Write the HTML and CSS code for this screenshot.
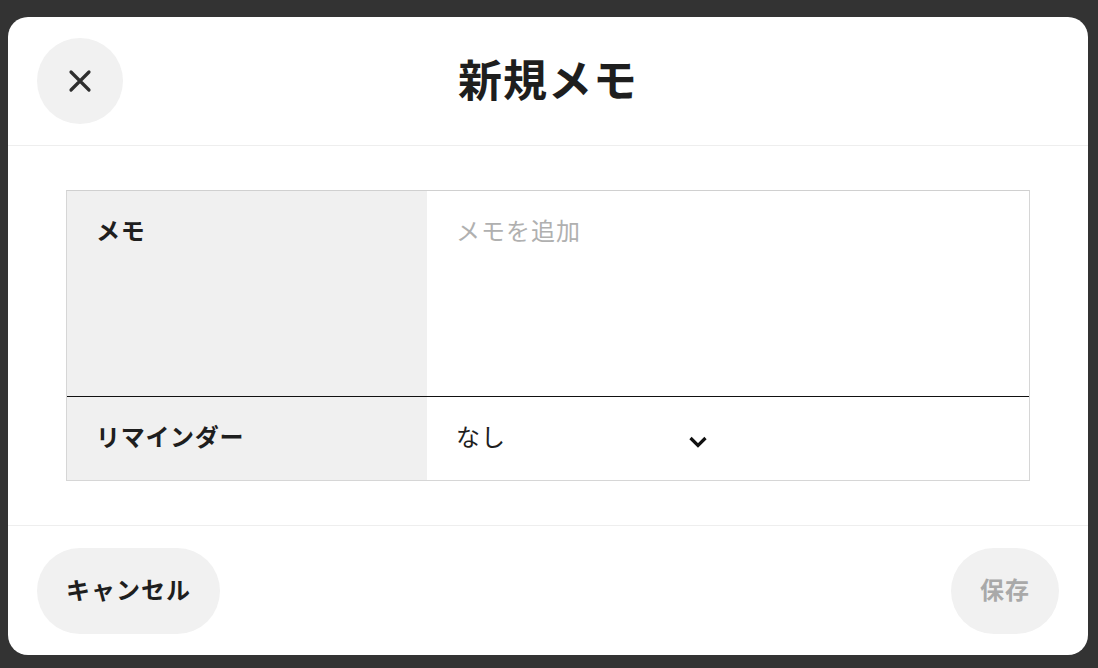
FILE: index.html
```html
<!DOCTYPE html>
<html lang="ja">

<head>
	<meta charset="UTF-8">
	<meta name="viewport" content="width=device-width, initial-scale=1.0">
	<title>新規メモ</title>

	<link rel="stylesheet" href="styles.css">

</head>

<body>

	<div class="modal">

		<div class="modal_head">
			<button class="close_btn" aria-label="閉じる">
				<svg width="24" height="24" viewBox="0 0 24 24">
					<path d="M3 3 L21 21 M21 3 L3 21" stroke="#2e2e2e" stroke-width="3.2" stroke-linecap="round" fill="none"/>
				</svg>
			</button>
			<h1>新規メモ</h1>
		</div>

		<div class="modal_body">
			<div class="form_table">
				<div class="label">メモ</div>
				<div class="field">
					<textarea class="memo_input" placeholder="メモを追加"></textarea>
				</div>

				<div class="label row_line">リマインダー</div>
				<div class="field row_line">
					<div class="select">
						<span>なし</span>
						<svg width="20" height="12" viewBox="0 0 20 12">
							<path d="M2.5 2 L10 9.5 L17.5 2" stroke="#111" stroke-width="3.2" fill="none"/>
						</svg>
					</div>
				</div>
			</div>
		</div>

		<div class="modal_foot">
			<button class="pill_btn">キャンセル</button>
			<button class="pill_btn save_btn" disabled>保存</button>
		</div>

	</div>

</body>

</html>
```

FILE: styles.css
```css
* {
	font-family: 'Noto Sans CJK JP', 'Noto Sans', sans-serif;
	box-sizing: border-box;
}

body {
	margin: 0;
	background: #333333;
	height: 668px;
	overflow: hidden;
}

button {
	border: none;
	cursor: pointer;
}

.modal {
	margin: 17px 0 0 8px;
	width: 1080px;
	height: 638px;
	background: #fff;
	border-radius: 20px;
	display: flex;
	flex-direction: column;
}

.modal_head {
	position: relative;
	height: 130px;
	padding: 21px 29px;
	border-bottom: 1px solid #eeeeee;
	display: flex;
	align-items: center;
	justify-content: center;
}

.modal_head>h1 {
	margin: 0 0 6px 0;
	font-size: 44px;
	font-weight: 700;
	color: #1e1e1e;
	letter-spacing: 1px;
}

.close_btn {
	position: absolute;
	left: 29px;
	top: 21px;
	width: 86px;
	height: 86px;
	border-radius: 50%;
	background: #f1f1f1;
	display: flex;
	align-items: center;
	justify-content: center;
}

.modal_body {
	flex: 1;
	padding: 44px 58px;
	border-bottom: 1px solid #eeeeee;
}

.form_table {
	display: grid;
	grid-template-columns: 360px 1fr;
	grid-template-rows: 205px 84px;
	border: 1px solid #d6d6d6;
	border-top-color: #d0d0d0;
}

.label {
	background: #f0f0f0;
	padding: 21px 29px;
	font-size: 24px;
	font-weight: 700;
	line-height: 36px;
	letter-spacing: 0.7px;
	color: #1e1e1e;
}

.field {
	padding: 21px 29px;
}

.row_line {
	border-top: 1px solid #111;
}

.memo_input {
	display: block;
	width: 100%;
	height: 100%;
	border: none;
	resize: none;
	outline: none;
	padding: 0;
	font-size: 24px;
	line-height: 36px;
	letter-spacing: 1px;
	color: #1e1e1e;
}

.memo_input::placeholder {
	color: #b0b0b0;
}

.select {
	width: 252px;
	display: flex;
	align-items: center;
	justify-content: space-between;
	font-size: 24px;
	line-height: 36px;
	letter-spacing: 1px;
	color: #1e1e1e;
}

.select>svg {
	margin-top: 11px;
}

.modal_foot {
	height: 130px;
	padding: 21px 29px;
	display: flex;
	align-items: center;
	justify-content: space-between;
}

.pill_btn {
	height: 86px;
	padding: 0 29px 4px;
	border-radius: 43px;
	background: #f1f1f1;
	font-size: 24px;
	font-weight: 700;
	letter-spacing: 1px;
	color: #1e1e1e;
}

.save_btn {
	color: #a9a9a9;
	cursor: default;
}
```
